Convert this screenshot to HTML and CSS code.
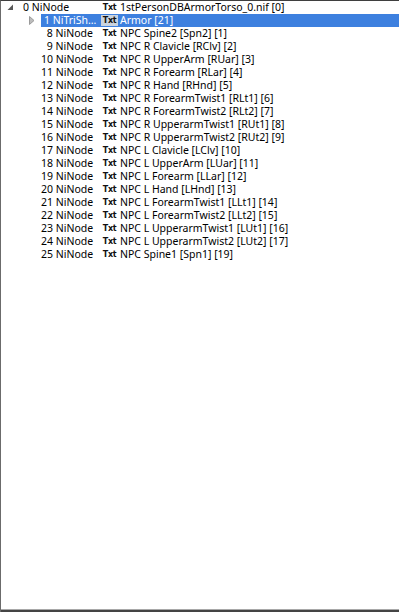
FILE: index.html
```html
<!DOCTYPE html>
<html>
<head>
<meta charset="utf-8">
<link rel="stylesheet" href="styles.css">
</head>
<body>
<div class="frame">
  <div class="tree">
    <div class="row root">
      <span class="exp"><svg width="7" height="7" viewBox="0 0 7 7"><path d="M6 0.5 L6 6 L0.5 6 Z" fill="#595959"/></svg></span>
      <span class="c1 left">0 NiNode</span>
      <span class="txt">Txt</span>
      <span class="name">1stPersonDBArmorTorso_0.nif [0]</span>
    </div>
    <div class="row child sel">
      <span class="exp2"><svg width="6" height="9" viewBox="0 0 6 9"><path d="M0.5 0.5 L5 4.5 L0.5 8.5 Z" fill="#bdbdbd" stroke="#9a9a9a" stroke-width="1"/></svg></span>
      <div class="hl">
        <span class="c1 ell">1 NiTriShape</span>
        <span class="txt">Txt</span>
        <span class="name">Armor [21]</span>
      </div>
    </div>
    <div class="row child"><div class="hl"><span class="c1">8 NiNode</span><span class="txt">Txt</span><span class="name">NPC Spine2 [Spn2] [1]</span></div></div>
    <div class="row child"><div class="hl"><span class="c1">9 NiNode</span><span class="txt">Txt</span><span class="name">NPC R Clavicle [RClv] [2]</span></div></div>
    <div class="row child"><div class="hl"><span class="c1">10 NiNode</span><span class="txt">Txt</span><span class="name">NPC R UpperArm [RUar] [3]</span></div></div>
    <div class="row child"><div class="hl"><span class="c1">11 NiNode</span><span class="txt">Txt</span><span class="name">NPC R Forearm [RLar] [4]</span></div></div>
    <div class="row child"><div class="hl"><span class="c1">12 NiNode</span><span class="txt">Txt</span><span class="name">NPC R Hand [RHnd] [5]</span></div></div>
    <div class="row child"><div class="hl"><span class="c1">13 NiNode</span><span class="txt">Txt</span><span class="name">NPC R ForearmTwist1 [RLt1] [6]</span></div></div>
    <div class="row child"><div class="hl"><span class="c1">14 NiNode</span><span class="txt">Txt</span><span class="name">NPC R ForearmTwist2 [RLt2] [7]</span></div></div>
    <div class="row child"><div class="hl"><span class="c1">15 NiNode</span><span class="txt">Txt</span><span class="name">NPC R UpperarmTwist1 [RUt1] [8]</span></div></div>
    <div class="row child"><div class="hl"><span class="c1">16 NiNode</span><span class="txt">Txt</span><span class="name">NPC R UpperarmTwist2 [RUt2] [9]</span></div></div>
    <div class="row child"><div class="hl"><span class="c1">17 NiNode</span><span class="txt">Txt</span><span class="name">NPC L Clavicle [LClv] [10]</span></div></div>
    <div class="row child"><div class="hl"><span class="c1">18 NiNode</span><span class="txt">Txt</span><span class="name">NPC L UpperArm [LUar] [11]</span></div></div>
    <div class="row child"><div class="hl"><span class="c1">19 NiNode</span><span class="txt">Txt</span><span class="name">NPC L Forearm [LLar] [12]</span></div></div>
    <div class="row child"><div class="hl"><span class="c1">20 NiNode</span><span class="txt">Txt</span><span class="name">NPC L Hand [LHnd] [13]</span></div></div>
    <div class="row child"><div class="hl"><span class="c1">21 NiNode</span><span class="txt">Txt</span><span class="name">NPC L ForearmTwist1 [LLt1] [14]</span></div></div>
    <div class="row child"><div class="hl"><span class="c1">22 NiNode</span><span class="txt">Txt</span><span class="name">NPC L ForearmTwist2 [LLt2] [15]</span></div></div>
    <div class="row child"><div class="hl"><span class="c1">23 NiNode</span><span class="txt">Txt</span><span class="name">NPC L UpperarmTwist1 [LUt1] [16]</span></div></div>
    <div class="row child"><div class="hl"><span class="c1">24 NiNode</span><span class="txt">Txt</span><span class="name">NPC L UpperarmTwist2 [LUt2] [17]</span></div></div>
    <div class="row child"><div class="hl"><span class="c1">25 NiNode</span><span class="txt">Txt</span><span class="name">NPC Spine1 [Spn1] [19]</span></div></div>
  </div>
  <div class="bottom"></div>
</div>
</body>
</html>
```

FILE: styles.css
```css
html, body {
  margin: 0;
  padding: 0;
  background: #ffffff;
}
.frame {
  width: 399px;
  height: 612px;
  box-sizing: border-box;
  border-top: 1px solid #3f3f3f;
  border-left: 1px solid #6b6b6b;
  display: flex;
  flex-direction: column;
  font-family: "Noto Sans", "Liberation Sans", sans-serif;
  font-size: 10.5px;
  color: #000000;
}
.tree {
  flex: 1;
}
.bottom {
  height: 3px;
  border-top: 1px solid #a8a8a8;
  background: #444444;
  box-sizing: border-box;
}
.row {
  height: 13px;
  line-height: 13px;
  display: flex;
  align-items: center;
  white-space: nowrap;
}
.root {
  padding-left: 6px;
}
.exp {
  width: 16px;
  height: 13px;
  display: flex;
  align-items: center;
}
.exp svg { display: block; margin-top: -1px; }
.c1 {
  box-sizing: border-box;
  flex: none;
}
.root .c1 {
  width: 78px;
}
.child {
  padding-left: 40px;
  position: relative;
}
.exp2 {
  position: absolute;
  left: 28px;
  top: 2px;
}
.exp2 svg { display: block; }
.hl {
  flex: 1;
  display: flex;
  align-items: center;
  height: 13px;
}
.sel .hl {
  background: #3d80df;
  color: #ffffff;
}
.child .c1 {
  width: 60px;
  text-align: right;
  padding-right: 8px;
}
.child .c1.ell {
  text-align: left;
  padding-left: 3px;
  padding-right: 2px;
  overflow: hidden;
  text-overflow: ellipsis;
}
.txt {
  flex: none;
  font-family: "DejaVu Sans", sans-serif;
  font-weight: bold;
  font-size: 8px;
  width: 17px;
  text-align: center;
  color: #111111;
  letter-spacing: -0.3px;
}
.sel .txt {
  background: #c9d3df;
  line-height: 11px;
  height: 11px;
  color: #111111;
}
.name {
  padding-left: 2px;
}
```
